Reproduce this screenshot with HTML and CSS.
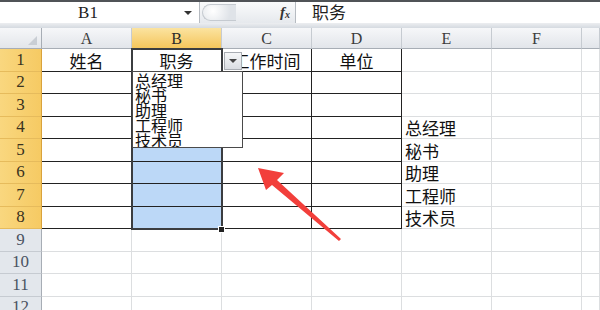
FILE: index.html
```html
<!DOCTYPE html>
<html>
<head>
<meta charset="utf-8">
<link rel="stylesheet" href="styles.css">
</head>
<body>

<div class="formula-bar">
  <div class="name-box"><span class="ref">B1</span><span class="nb-arrow"></span></div>
  <div class="fx-zone"><span class="splitter"></span><span class="fx">f<sub>x</sub></span></div>
  <div class="formula-input">职务</div>
</div>
<div class="band"></div>

<div class="sheet">
  <div class="corner"></div><div class="ch">A</div><div class="ch on">B</div><div class="ch">C</div><div class="ch">D</div><div class="ch">E</div><div class="ch">F</div><div class="ch last"></div>

  <div class="rh on">1</div><div class="c t">姓名</div><div class="c t">职务</div><div class="c t">工作时间</div><div class="c t">单位</div><div class="c"></div><div class="c"></div><div class="c"></div>
  <div class="rh on">2</div><div class="c t"></div><div class="c t sel"></div><div class="c t"></div><div class="c t"></div><div class="c"></div><div class="c"></div><div class="c"></div>
  <div class="rh on">3</div><div class="c t"></div><div class="c t sel"></div><div class="c t"></div><div class="c t"></div><div class="c"></div><div class="c"></div><div class="c"></div>
  <div class="rh on">4</div><div class="c t"></div><div class="c t sel"></div><div class="c t"></div><div class="c t"></div><div class="c left">总经理</div><div class="c"></div><div class="c"></div>
  <div class="rh on">5</div><div class="c t"></div><div class="c t sel"></div><div class="c t"></div><div class="c t"></div><div class="c left">秘书</div><div class="c"></div><div class="c"></div>
  <div class="rh on">6</div><div class="c t"></div><div class="c t sel"></div><div class="c t"></div><div class="c t"></div><div class="c left">助理</div><div class="c"></div><div class="c"></div>
  <div class="rh on">7</div><div class="c t"></div><div class="c t sel"></div><div class="c t"></div><div class="c t"></div><div class="c left">工程师</div><div class="c"></div><div class="c"></div>
  <div class="rh on">8</div><div class="c t"></div><div class="c t sel"></div><div class="c t"></div><div class="c t"></div><div class="c left">技术员</div><div class="c"></div><div class="c"></div>
  <div class="rh">9</div><div class="c"></div><div class="c"></div><div class="c"></div><div class="c"></div><div class="c"></div><div class="c"></div><div class="c"></div>
  <div class="rh">10</div><div class="c"></div><div class="c"></div><div class="c"></div><div class="c"></div><div class="c"></div><div class="c"></div><div class="c"></div>
  <div class="rh">11</div><div class="c"></div><div class="c"></div><div class="c"></div><div class="c"></div><div class="c"></div><div class="c"></div><div class="c"></div>
  <div class="rh">12</div><div class="c"></div><div class="c"></div><div class="c"></div><div class="c"></div><div class="c"></div><div class="c"></div><div class="c"></div>

  <!-- selection B1:B8 -->
  <div class="sel-box"></div>
  <div class="fill-handle"></div>

  <!-- data validation dropdown -->
  <div class="dd-btn"><span></span></div>
  <div class="dd-list">
    <div>总经理</div>
    <div>秘书</div>
    <div>助理</div>
    <div>工程师</div>
    <div>技术员</div>
  </div>
</div>

<svg class="red-arrow" width="600" height="310" viewBox="0 0 600 310">
  <polygon points="258,168 284,173 277,180 341,239 339,241 272,185 266,190" fill="#f23f3b"/>
</svg>

</body>
</html>
```

FILE: styles.css
```css
body {
    margin: 0;
    width: 600px;
    height: 310px;
    overflow: hidden;
    position: relative;
    background: #fff;
    font-family: "Noto Sans CJK SC", sans-serif;
}

.formula-bar {
    display: flex;
    height: 21px;
    border-top: 2px solid #505357;
    background: #fff;
}

.name-box {
    width: 200px;
    display: flex;
    align-items: center;
    border-right: 1px solid #b6bbc1;
    box-sizing: border-box;
}

.name-box .ref {
    width: 176px;
    text-align: center;
    font: 17px "Liberation Serif", serif;
    color: #1e1e1e;
}

.nb-arrow {
    margin-left: 8px;
    width: 0;
    height: 0;
    border-left: 4px solid transparent;
    border-right: 4px solid transparent;
    border-top: 4px solid #333;
}

.fx-zone {
    width: 96px;
    display: flex;
    align-items: center;
    background: linear-gradient(#fafbfc, #e6e9ed);
    border-right: 1px solid #b6bbc1;
    box-sizing: border-box;
}

.splitter {
    width: 34px;
    height: 17px;
    margin-left: 2px;
    border: 1px solid #c5cad0;
    border-right: none;
    border-radius: 10px 0 0 10px;
    background: radial-gradient(circle at 10px 6px, #ffffff, #dfe3e8 70%);
    box-sizing: border-box;
}

.fx {
    margin-left: auto;
    margin-right: 5px;
    font: italic bold 15px "Liberation Serif", serif;
    color: #333;
}

.fx sub {
    font-size: 10px;
    vertical-align: -1px;
}

.formula-input {
    flex: 1;
    padding-left: 16px;
    font-size: 17px;
    line-height: 20px;
    color: #1e1e1e;
}

.band {
    height: 5px;
    background: linear-gradient(#eceef1, #d5dae0);
}

.sheet {
    position: relative;
    display: grid;
    grid-template-columns: 42px repeat(6, 90px) 18px;
    grid-template-rows: 21px repeat(12, 22.5px);
}

.corner {
    position: relative;
    background: linear-gradient(#f6f7f9, #e3e6ea);
    border-right: 1px solid #a7adb5;
    border-bottom: 1px solid #a7adb5;
    box-sizing: border-box;
}

.corner::after {
    content: "";
    position: absolute;
    right: 4px;
    bottom: 3px;
    border-left: 9px solid transparent;
    border-bottom: 9px solid #c9ced4;
}

.ch {
    background: linear-gradient(#f6f7f9, #e2e5ea);
    border-right: 1px solid #c6cbd1;
    border-bottom: 1px solid #a7adb5;
    box-sizing: border-box;
    text-align: center;
    font: 16px/21px "Liberation Serif", serif;
    color: #3c3c3c;
}

.ch.on {
    background: linear-gradient(#fbe3a0, #f5c65c);
    border-bottom-color: #d9a23c;
    color: #2a2a2a;
}

.rh {
    display: flex;
    align-items: center;
    justify-content: center;
    background: #e3e7ec;
    border-right: 1px solid #a7adb5;
    border-bottom: 1px solid #c6cbd1;
    box-sizing: border-box;
    font: 17px "Liberation Serif", serif;
    color: #4a5362;
}

.rh.on {
    background: linear-gradient(90deg, #f9d77f, #f6ca63);
    border-bottom-color: #e6bb5c;
    border-right-color: #d9a23c;
    color: #3a3220;
}

.c {
    display: flex;
    align-items: flex-end;
    justify-content: center;
    border-right: 1px solid #dcdee0;
    border-bottom: 1px solid #dcdee0;
    box-sizing: border-box;
    font-size: 17px;
    line-height: 21px;
    color: #111;
    white-space: nowrap;
    overflow: hidden;
}

.c.t {
    border-color: #222;
}

.c.left {
    justify-content: flex-start;
    padding-left: 3px;
    overflow: visible;
}

.c.sel {
    background: #bcd8f7;
}

.sel-box {
    position: absolute;
    left: 131px;
    top: 20px;
    width: 92px;
    height: 182px;
    border: 2px solid #3b3d40;
    box-sizing: border-box;
}

.fill-handle {
    position: absolute;
    left: 218px;
    top: 198px;
    width: 7px;
    height: 7px;
    background: #222;
    border: 1px solid #fff;
    box-sizing: border-box;
}

.dd-btn {
    position: absolute;
    left: 224px;
    top: 24px;
    width: 18px;
    height: 18px;
    display: flex;
    align-items: center;
    justify-content: center;
    border: 1px solid #a9adb3;
    background: linear-gradient(#f6f7f8, #dadde2);
    box-sizing: border-box;
}

.dd-btn span {
    border-left: 4px solid transparent;
    border-right: 4px solid transparent;
    border-top: 4px solid #444;
}

.dd-list {
    position: absolute;
    left: 132px;
    top: 43px;
    width: 111px;
    height: 77px;
    padding: 1px 0 0 2px;
    border: 1px solid #4a4a4a;
    background: #fff;
    box-sizing: border-box;
    overflow: hidden;
    font-size: 16px;
    line-height: 15px;
    color: #111;
}

.red-arrow {
    position: absolute;
    left: 0;
    top: 0;
}
```
